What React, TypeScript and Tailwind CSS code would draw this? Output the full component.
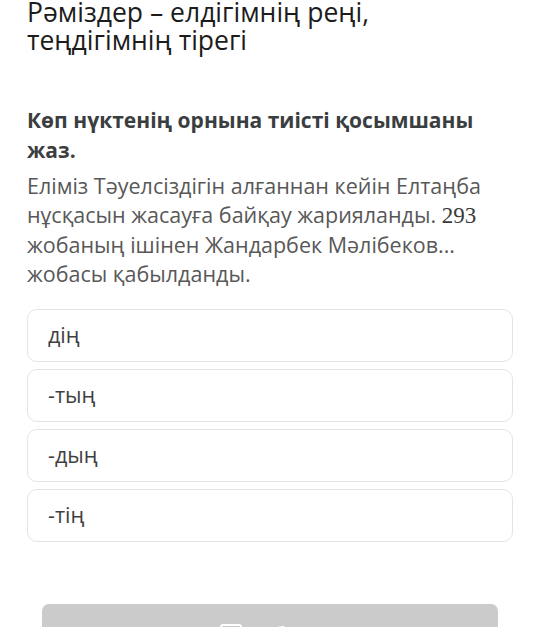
const options = ['дің', '-тың', '-дың', '-тің']

export default function App() {
  return (
    <div className="h-[627px] w-[540px] overflow-hidden bg-white font-['Open_Sans',sans-serif]">
      <div className="px-[27px]">
        <h1 className="-mt-[2px] text-[26.5px] leading-[28px] text-[#1c1c1c]">
          Рәміздер – елдігімнің реңі,
          <br />
          теңдігімнің тірегі
        </h1>

        <h2 className="mt-[51px] pr-[20px] text-[21px] font-bold leading-[30px] text-[#3b3e40]">
          Көп нүктенің орнына тиісті қосымшаны жаз.
        </h2>

        <p className="mt-[6px] text-[21.5px] leading-[29px] text-[#585858]">
          Еліміз Тәуелсіздігін алғаннан кейін Елтаңба нұсқасын жасауға байқау жарияланды.{' '}
          <span className="font-['Liberation_Serif',serif] text-[23px] text-[#3a3a3a]">293</span> жобаның ішінен
          Жандарбек Мәлібеков... жобасы қабылданды.
        </p>

        <div className="mt-[21px] flex flex-col gap-[7px]">
          {options.map((opt) => (
            <div
              key={opt}
              className="flex h-[53px] items-center rounded-[10px] border border-[#e4e4e4] px-[20px] text-[21.5px] text-[#3f3f3f]"
            >
              {opt}
            </div>
          ))}
        </div>
      </div>

      <div className="mt-[62px] px-[42px]">
        <div className="flex h-[48px] items-start justify-center gap-2 rounded-[7px] bg-[#cbcbcb] pt-[20px]">
          <div className="h-[18px] w-[22px] rounded-[3px] border-2 border-white" />
          <span className="text-[20px] font-semibold leading-[20px] text-white">Жіберу</span>
        </div>
      </div>
    </div>
  )
}
